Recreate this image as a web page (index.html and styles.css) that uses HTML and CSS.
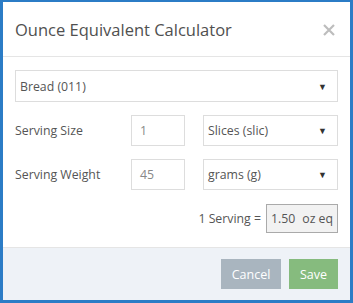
FILE: index.html
```html
<!DOCTYPE html>
<html>
<head>
<meta charset="utf-8">
<link rel="stylesheet" href="styles.css">
</head>
<body>
<div class="modal">
  <div class="modal-header">
    <h1 class="title">Ounce Equivalent Calculator</h1>
    <svg class="close" width="12" height="12" viewBox="0 0 12 12"><path d="M1 1L11 11M11 1L1 11" stroke="#bdbdbd" stroke-width="2.2" fill="none"/></svg>
  </div>
  <div class="modal-body">
    <div class="select full"><span>Bread (011)</span><span class="caret">▼</span></div>
    <div class="row">
      <label class="label">Serving Size</label>
      <div class="input">1</div>
      <div class="select unit"><span>Slices (slic)</span><span class="caret">▼</span></div>
    </div>
    <div class="row">
      <label class="label">Serving Weight</label>
      <div class="input">45</div>
      <div class="select unit"><span>grams (g)</span><span class="caret">▼</span></div>
    </div>
    <div class="result">
      <span class="result-label">1 Serving =</span>
      <div class="result-box"><span>1.50</span><span>oz eq</span></div>
    </div>
  </div>
  <div class="modal-footer">
    <button class="btn cancel">Cancel</button>
    <button class="btn save">Save</button>
  </div>
</div>
</body>
</html>
```

FILE: styles.css
```css
* { box-sizing: border-box; }
html, body { margin: 0; padding: 0; }
body {
  font-family: "Open Sans", "Liberation Sans", sans-serif;
  background: #ffffff;
}
.modal {
  width: 353px;
  height: 303px;
  border: 3px solid #2b7cc6;
  border-top-width: 2px;
  background: #fff;
  display: flex;
  flex-direction: column;
}
.modal-header {
  height: 55px;
  border-bottom: 1px solid #e5e5e5;
  display: flex;
  align-items: center;
  justify-content: space-between;
  padding: 0 15px 0 12px;
}
.title {
  margin: 0;
  font-size: 16.5px;
  font-weight: 400;
  color: #505050;
}
.close { display: block; margin-top: 1px; }
.modal-body {
  flex: 1;
  padding: 13px 12px 0 12px;
  display: flex;
  flex-direction: column;
}
.select {
  height: 32px;
  border: 1px solid #ddd;
  display: flex;
  align-items: center;
  justify-content: space-between;
  padding: 0 10px 0 4px;
  font-size: 12.3px;
  color: #555;
}
.caret {
  font-size: 9px;
  color: #333;
}
.row {
  display: flex;
  align-items: center;
  margin-top: 13px;
  height: 31px;
}
.label {
  width: 116px;
  font-size: 12.3px;
  color: #555;
}
.input {
  width: 54px;
  height: 31px;
  border: 1px solid #ddd;
  display: flex;
  align-items: center;
  padding-left: 8px;
  font-size: 12.3px;
  color: #888;
}
.select.unit {
  height: 31px;
  flex: 1;
  margin-left: 18px;
}
.result {
  display: flex;
  justify-content: flex-end;
  align-items: center;
  margin-top: 14px;
}
.result-label {
  font-size: 12.3px;
  color: #555;
  margin-right: 5px;
}
.result-box {
  width: 72px;
  height: 29px;
  border: 1px solid #aaa;
  background: #f2f2f2;
  display: flex;
  align-items: center;
  justify-content: center;
  gap: 7px;
  font-size: 12.3px;
  color: #555;
}
.modal-footer {
  height: 53px;
  border-top: 1px solid #e5e5e5;
  background: #eef2f7;
  display: flex;
  justify-content: flex-end;
  align-items: center;
  gap: 8px;
  padding: 0 12px;
}
.btn {
  height: 30px;
  border: none;
  color: #fff;
  font-family: "Open Sans", "Liberation Sans", sans-serif;
  font-size: 12.5px;
  padding: 0;
}
.cancel { width: 60px; background: #a9b5bf; }
.save { width: 49px; background: #86bb7e; }
```
